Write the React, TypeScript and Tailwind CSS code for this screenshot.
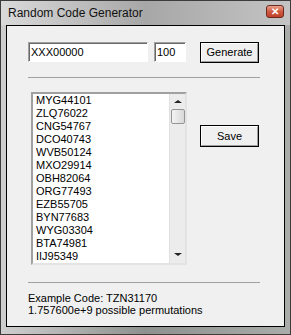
const codes = [
  'MYG44101',
  'ZLQ76022',
  'CNG54767',
  'DCO40743',
  'WVB50124',
  'MXO29914',
  'OBH82064',
  'ORG77493',
  'EZB55705',
  'BYN77683',
  'WYG03304',
  'BTA74981',
  'IIJ95349',
  'STU38870',
];

function Button({ label, className }: { label: string; className: string }) {
  return (
    <div className={`border border-black bg-[#f0f0f0] ${className}`}>
      <div className="h-full w-full border border-t-white border-l-white border-r-[#a0a0a0] border-b-[#a0a0a0] flex items-center justify-center text-[11px] text-black">
        {label}
      </div>
    </div>
  );
}

export default function App() {
  return (
    <div className="w-[291px] h-[335px] flex flex-col border border-[#3c3c3c] bg-gradient-to-r from-[#cfcfcf] via-[#8e918e] to-[#a9aca9] font-['Liberation_Sans',Arial,sans-serif]">
      {/* title bar */}
      <div className="h-[24px] flex items-start pl-[7px] pr-[6px] bg-gradient-to-r from-[#dadada] via-[#a7a7a7] to-[#c4c4c4]">
        <span className="mt-[5px] text-[12px] leading-[14px] text-[#111]">Random Code Generator</span>
        <div className="ml-auto mt-[4px] w-[18px] h-[13px] rounded-[3px] border border-[#6b2a1f] bg-gradient-to-b from-[#e9a08c] via-[#cf5a3f] to-[#c0412a] flex items-center justify-center">
          <span className="text-[10px] leading-[10px] font-bold text-white">✕</span>
        </div>
      </div>

      {/* client area */}
      <div className="flex-1 px-[5px] pb-[7px]">
        <div className="h-full border border-black bg-[#f0f0f0] pl-[21px] pt-[16px] text-[11px] text-black">
          <div className="flex items-start">
            <div className="w-[120px] h-[20px] border border-t-[#a0a0a0] border-l-[#a0a0a0] border-r-white border-b-white shadow-[inset_1px_1px_0_#696969] bg-white pl-[2px] flex items-center">
              XXX00000
            </div>
            <div className="ml-[6px] w-[32px] h-[20px] border border-t-[#a0a0a0] border-l-[#a0a0a0] border-r-white border-b-white shadow-[inset_1px_1px_0_#696969] bg-white pl-[2px] flex items-center">
              100
            </div>
            <Button label="Generate" className="ml-[14px] w-[59px] h-[21px]" />
          </div>

          <div className="mt-[14px] w-[232px] h-px bg-[#a0a0a0]" />

          <div className="mt-[14px] ml-[3px] flex items-start">
            <div className="w-[156px] h-[173px] border-2 border-t-[#a0a0a0] border-l-[#a0a0a0] border-r-[#e3e3e3] border-b-[#e3e3e3] bg-white flex overflow-hidden">
              <div className="flex-1 pl-[3px] overflow-hidden">
                {codes.map((c) => (
                  <div key={c} className="h-[13px] leading-[13px]">
                    {c}
                  </div>
                ))}
              </div>
              <div className="w-[16px] h-full bg-[#ececec] border-l border-[#e0e0e0] flex flex-col items-center">
                <div className="mt-[6px] w-0 h-0 border-l-[4px] border-r-[4px] border-b-[3px] border-l-transparent border-r-transparent border-b-[#222]" />
                <div className="mt-[6px] w-[14px] h-[15px] rounded-[2px] border border-[#959595] bg-gradient-to-r from-[#f4f4f4] to-[#d8d8d8]" />
                <div className="mt-auto mb-[7px] w-0 h-0 border-l-[4px] border-r-[4px] border-t-[3px] border-l-transparent border-r-transparent border-t-[#222]" />
              </div>
            </div>
            <Button label="Save" className="ml-[13px] mt-[33px] w-[59px] h-[22px]" />
          </div>

          <div className="mt-[17px] w-[232px] h-px bg-[#a0a0a0]" />

          <div className="mt-[9px] leading-[12px]">
            <div>Example Code: TZN31170</div>
            <div>1.757600e+9 possible permutations</div>
          </div>
        </div>
      </div>
    </div>
  );
}
